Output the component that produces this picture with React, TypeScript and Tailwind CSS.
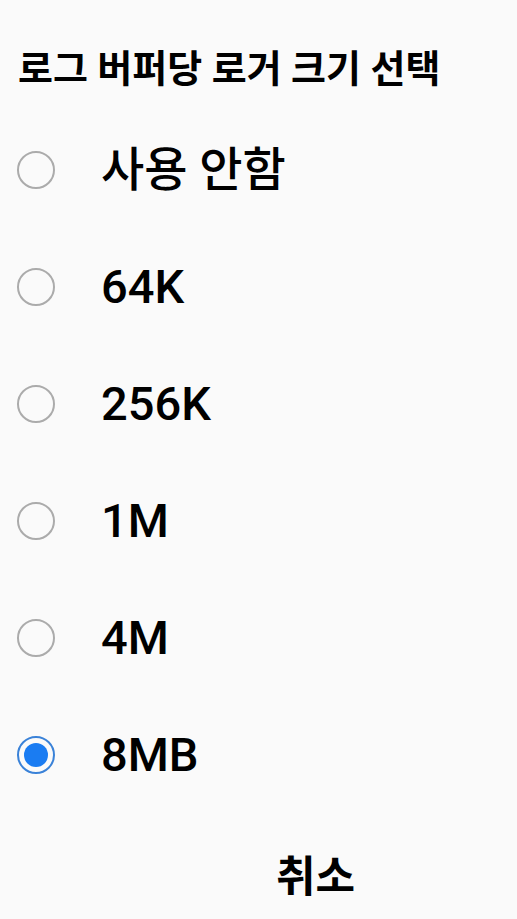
import React from 'react';

const options = ['사용 안함', '64K', '256K', '1M', '4M', '8MB'];

function Radio({ checked }: { checked: boolean }) {
  if (checked) {
    return (
      <span className="flex h-[38px] w-[38px] items-center justify-center rounded-full border-[2px] border-[#3a82d8]">
        <span className="h-[24px] w-[24px] rounded-full bg-[#1a7cf2]" />
      </span>
    );
  }
  return <span className="h-[38px] w-[38px] rounded-full border-[2px] border-[#ababab]" />;
}

export default function App() {
  const selected = '8MB';

  return (
    <div
      className="flex h-[919px] w-full flex-col bg-[#fafafa] text-black"
      style={{ fontFamily: 'Roboto, "Noto Sans CJK KR", sans-serif' }}
    >
      <h1 className="px-[18px] pb-[20px] pt-[47px] text-[38px] font-bold leading-[44px]">
        로그 버퍼당 로거 크기 선택
      </h1>

      <ul className="flex flex-col">
        {options.map((opt) => (
          <li key={opt} className="flex h-[117px] items-center">
            <div className="flex w-[101px] pl-[17px]">
              <Radio checked={opt === selected} />
            </div>
            <span className="text-[47px] font-medium leading-none">{opt}</span>
          </li>
        ))}
      </ul>

      <div className="mt-[32px] flex h-[64px] items-center justify-center">
        <button className="pl-[114px] text-[43px] font-bold">취소</button>
      </div>
    </div>
  );
}
